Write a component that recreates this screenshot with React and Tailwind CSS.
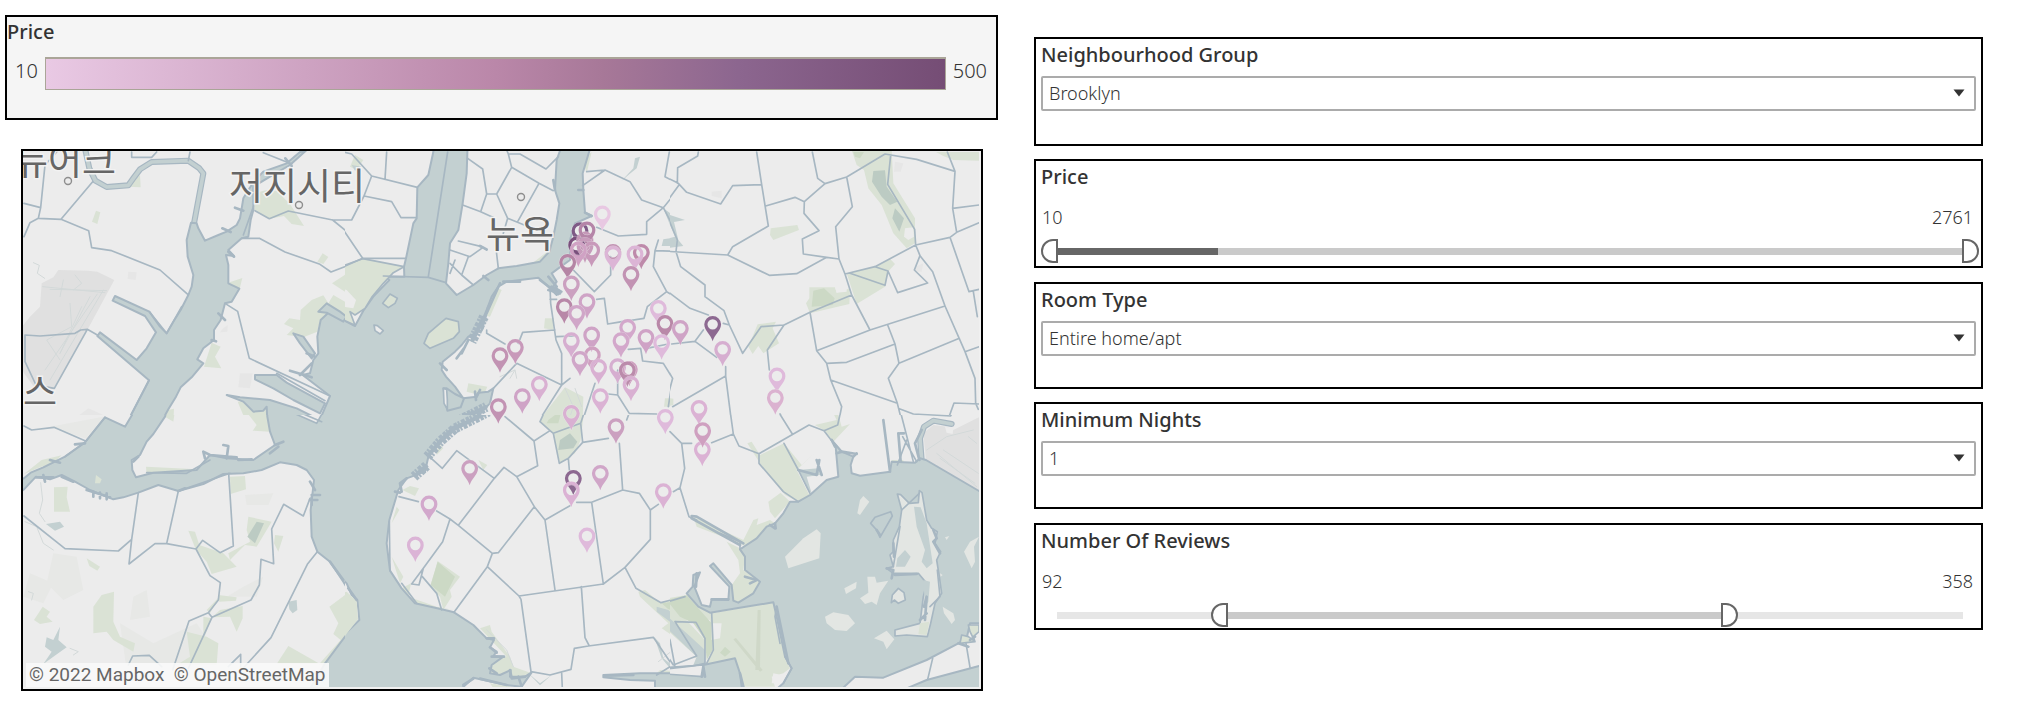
import React, { useState } from 'react';

const LAND = '#ececec';
const WATER = '#c3d0d1';
const EDGE = '#a7b7c2';
const PARK = '#dae2d5';
const GROVE = '#ccd9c5';
const POND = '#bccbc3';
const APRON = '#e0e0e0';
const MARSH = '#e3e6e3';

/* The base map is cut into six sheets, drawn at three units to the pixel. */
const SHEETS = [
  {
    at: [10, 140],
    clip: [0, 0, 1005, 825],
    under: [
      [APRON, 'M30,568L60,530L90,500L95,430L130,412L145,390L235,392L262,395L313,420L232,570L130,748L75,745L42,700L30,665Z'],
      ['#e6e6e6', 'M355,395L380,397L377,420L353,417Z M690,700L728,700L720,745L685,742Z M205,828L235,805L280,825L280,850L200,850Z M640,565L653,555L652,575L630,577Z'],
      [PARK, 'M258,212L271,217L262,252L246,245Z M733,160L770,150L800,153L840,192L882,258L845,252L822,228L778,236L733,210Z M938,340L955,351L940,372L922,365Z M966,430L1030,388L1030,470L1000,452Z M822,552L838,535L870,540L872,510L905,480L940,466L955,490L970,465L1030,500L1030,530L960,515L930,540L922,575L880,592L830,585L850,565Z M605,608L632,620L615,650L634,685L582,680Z M683,785L715,782L735,800L770,795L768,850L710,850Z M475,810L492,806L490,850L450,850Z M355,140L390,105L392,142Z M650,430L697,414L688,450Z'],
    ],
    rivers: [
      'M226,30L238,85L256,122L290,141L355,136L372,112L390,88L425,66L535,62L568,85L580,100L552,250',
    ],
    water: [
      'M543,248L530,300L533,350L550,405L545,440L535,465L512,510L490,545L470,580L450,560L418,515L315,468L308,482L405,528L438,577L410,625L380,660L270,577L262,588L417,721L340,870L440,870L460,835L475,808L498,770L512,742L545,712L580,670L562,658L580,625L612,600L612,570L632,540L645,490L665,485L688,446L655,430L655,375L648,345L672,348L655,330L695,295L715,290L722,240L730,210L730,140L780,110L840,75L890,30L870,36L830,70L760,95L735,120L715,150L700,175L690,235L680,255L650,275L625,285L585,302L565,265L560,250Z',
      'M1050,560L955,518L932,540L922,590L925,640L910,660L900,700L878,705L960,768L925,850L1050,870Z',
      'M735,705L800,705L830,728L945,790L930,820L850,780L790,745L735,718Z',
      'M650,765L690,772L780,780L860,805L930,840L900,900L775,900L770,800L760,812L730,815L700,785Z',
      'M850,580L880,590L915,640L905,655L870,610Z M925,515L950,490L990,515L1010,530L1000,545L950,518Z',
    ],
    lines:
      'M42,190L92,203L105,75L140,36M92,203L85,235L60,248L42,290M85,235L153,238L248,125M153,238L236,272L245,323L305,332L450,390L535,465M365,36V52H425L440,36M540,36L535,62M735,212L778,236L835,213L968,240H1030M968,240L1005,270L1030,310M695,295H748L825,336L930,373L963,396L1030,370M645,490L683,514L718,655L960,768M800,700L945,782M760,38L845,72M45,585L90,588L195,580L212,570L232,568L262,585M45,585V665L78,735L133,745L232,568M700,285L730,200M418,515L470,580L515,500M355,840L417,721',
    ticks: 'M675,203L700,212M637,265L662,276M625,520L645,540M605,600L618,604M840,692L905,712M905,670L870,705M890,640L915,650M1012,512L1020,525M280,835L320,850M655,335L672,350M826,55L845,78',
    faint: 'M98,440L285,458M120,448L290,452M160,420L150,470M195,405L215,430L190,450M280,450L120,720M262,462L105,690M240,470L150,640M180,490L185,560L110,600L150,660M70,368L88,376L82,400L104,415M215,500L150,640',
  },
  {
    at: [340, 140],
    clip: [15, 0, 975, 825],
    under: [
      [PARK, 'M45,45L70,60L50,90L30,80Z M615,535H642L640,570L612,565Z M385,730L442,740L430,768L380,755Z M600,352L640,320L620,370L570,375Z M728,60L755,36L740,100Z M675,742L730,770L728,850L590,850Z M975,775L1000,775L1000,800L972,800Z M450,470L475,445L485,450L450,530L440,528Z'],
      [WATER, 'M838,130L880,85L885,55L900,50L890,85L865,105L842,125Z M35,75L65,80L45,92Z M970,205L1020,240L1010,250L1025,318H965L970,298L1005,292Z'],
    ],
    rivers: [],
    water: [
      'M285,10L278,45L265,105L232,142L230,235L220,250L198,355L192,380L193,410H135L148,420L100,470L70,512L45,558L10,540L-30,515V900H360L430,810L450,790L460,745L445,755L415,758L410,770L370,775L345,740L318,710L305,690L308,665L345,635L365,615L385,590L405,580L425,545L440,510L455,470L475,440L500,425L595,413L620,435L650,465L665,455L640,440L650,425L635,400L655,385L690,360L690,300L705,250L755,228L735,218L730,150L728,100L740,60L755,10H668L650,60L645,150L658,190L650,240L640,290L628,335L600,365L530,378L475,385L440,405L400,435L350,465L318,430L325,370L330,310L355,270L368,190L380,100L383,10Z',
      'M310,745L320,745L345,762L372,775L362,802L322,812Z',
    ],
    islands: [
      [PARK, 'M318,535L355,545L358,575L340,595L270,625L252,610L265,580L300,550Z'],
      [PARK, 'M128,490L150,462L172,475L165,490L145,503Z'],
      [LAND, 'M102,555L112,557L130,572L120,582L105,572Z'],
      [LAND, 'M310,745L320,748L322,780L322,808L312,790Z'],
      [PARK, 'M-20,388L68,356L192,380L160,398L130,430L95,472L75,505L45,525L30,515L45,556L-20,525Z'],
    ],
    over: [[LAND, 'M-10,440L20,450L48,480L40,505L10,500L-10,485Z']],
    lines:
      'M323,36L265,410M130,408L265,412L318,428M0,385L68,355H198M140,36L135,118M10,36L35,42L95,108L232,142M95,108L72,168L155,185L183,233H228M72,168L35,240H-5M0,255L68,355M383,55L428,87L440,162H470L515,82L505,42H540L618,87L655,50M505,42L500,30M515,82L597,130L640,152M597,130L533,245M470,162L503,235L560,258M503,235L490,280M440,162L422,215L368,195M422,215L465,235M355,303L425,320L440,330M425,325L390,350L330,330M468,325L475,385M385,350L365,405L400,435M330,370L365,405M345,360L330,400M728,137L795,90L870,125L905,180L970,203L1030,130M740,95L795,90M988,36L975,110L1030,140M1015,80V130M970,203L920,245V283L835,288L770,262M970,203L1005,270L1012,310M945,332L1030,335M955,300L945,332L940,380L980,455L1030,485M980,455L922,500L912,535L803,552L793,475L770,478M700,390L763,455L812,405V350M630,478H650M630,440L632,490L648,600L665,640V735L595,845M650,590L700,588M440,570V580L495,612M548,577L645,570M548,577L535,610M530,670L665,735M530,670L460,745M803,552L870,540M865,628L902,625L908,663L970,670L998,715L985,800M920,625L985,612M833,690V765L868,820M833,765L805,762M868,820L950,822M765,730L725,850M690,715L665,735',
    ticks:
      'M480,430L440,520M445,500L425,570M430,540L400,600M350,655L372,625M365,640L385,600M375,830L440,800M350,835L400,815M405,755L408,780M420,750L410,770M600,420L655,462M625,410L650,440M635,440L660,455M420,318L440,328M640,120L645,150M430,408L445,420M735,218L755,228M715,150L730,150M490,425L540,425M300,670L320,690M625,450L660,460',
    piers: 'M432,530L395,605M350,845L440,800',
    faint: 'M675,745L700,800L690,830M705,745L725,800M480,710L525,690L510,715M525,690L530,715',
  },
  {
    at: [660, 140],
    clip: [30, 0, 990, 825],
    under: [
      [PARK, 'M575,30H695L700,130L765,235V310L740,325L700,280L665,195L625,145L612,90L590,75Z M828,36H957V62L880,60L850,48Z M332,265L412,255L417,270L340,300L330,285Z M448,442H525L530,458L570,445L568,492L450,520L438,490L448,475Z M560,400L650,378L690,356L705,372L684,395L675,440L590,492Z M293,553L348,545L338,565L357,610L310,640L295,618L278,642L265,620Z M14,772L40,776L40,795L18,800Z M515,828L540,826L530,850L518,850Z'],
      [GROVE, 'M580,36H612L600,55L585,50Z M460,452L492,445L524,475L518,495L455,500Z'],
      [POND, 'M640,93L675,91L680,140L712,185L690,195L665,170L636,125Z M705,205L732,235L718,275L697,235Z'],
      [LAND, 'M735,265L760,262L762,290L745,300L732,290Z M525,442H560V455L530,458Z'],
      [WATER, 'M5,195L30,225L75,240L42,246L55,300L70,318L5,326V300L45,290L20,230Z'],
      ['#e6e6e6', 'M705,65L730,70L722,95L702,95Z M765,380L790,370L785,395L765,395Z M155,155L185,152V175L155,168Z'],
    ],
    rivers: [],
    water: [],
    lines:
      'M28,36L15,110L55,130L80,157L182,192L218,137L305,134M115,36L113,48L53,83L52,130M290,36L305,134L325,258L218,320L203,345L-10,332M317,198L405,172L433,185L495,131L560,111L675,42L770,58L885,94L862,36M457,36L473,115L495,131M433,185L432,220L477,272L427,297L430,342L500,352L537,357L527,260L577,200L560,111M203,345L328,406L410,401L500,352M57,135L10,200L52,300L48,335L62,380L135,435V470L192,512L208,555L248,640L303,560L372,555L450,517L575,465L555,402L537,357M555,402L645,380L767,315L870,292L890,277L957,248M645,380L684,393L675,436L570,400M684,393L713,458L803,429L763,390L780,347L767,315L764,268L683,133L692,45M885,94L878,205L957,195M878,205L890,277M870,292L927,455L957,448M940,455L952,530M780,347L818,395L855,498L915,635L945,715L947,790L955,808M915,635L957,620M575,465L630,570M470,632L630,570L855,498M450,517L470,632L500,670L560,667L705,612L683,555M705,612L717,670L898,595M717,670L685,715L712,790L727,850M500,670L512,720L712,790M512,720L545,800L535,850M718,806L760,822L868,828L882,789L957,792M372,555L322,630L328,690M190,550L208,555M20,452L90,505L145,525M0,415L20,452L0,468M130,570L105,604L35,612M105,604L170,652M197,680V708L38,800M197,708L215,850M0,670L12,672L38,715L15,800M360,822L385,860',
    ticks: 'M663,838L680,838M810,838L830,840',
    faint: '',
  },
  {
    at: [10, 410],
    clip: [0, 15, 1005, 850],
    under: [
      ['#e7e8e6', 'M130,430L200,440L220,540L160,570L110,520Z M330,640L430,700L560,640L600,700L500,780H350Z M120,50L280,20L240,90Z M700,530L760,500L740,560L650,560Z M60,490L130,520L100,580L40,560Z M705,255L790,250L775,285L710,285Z M370,560L410,540L420,620L360,630Z'],
      [PARK, 'M132,232L173,230L170,262L180,305H132Z M42,192L95,150L155,136L130,160L90,172Z M660,200L705,198L708,238L662,252Z M408,170L560,178L555,188L410,195Z M715,320L785,335L740,410L705,405L660,450L655,430L720,395L710,360Z M795,375L820,378L805,425L792,400Z M535,362L555,365L568,405L640,430L680,470L605,492L590,455L558,420Z M250,590L275,555L312,545L310,635L330,680L375,700L370,725L310,690L290,665L250,670Z M98,590L120,605L110,620L128,635L90,642L72,630Z M625,555L680,562L678,572L628,575Z M630,600L698,588V625L680,665L660,620L606,622Z M530,665L590,680L625,700L620,765H500L540,740Z M580,620L605,625L580,690Z M835,708L930,762H800Z M1015,548L958,590L985,640L970,672L992,690L925,765H948L1040,650V560Z M705,0H775L780,65L728,62L740,45Z M470,0H495L490,35L465,20Z M230,445L270,470L262,482L238,468Z M590,600L628,560L600,610Z'],
      [POND, 'M740,335L762,340L735,400L712,380Z'],
      [WATER, 'M108,342L150,335L162,350L135,362Z M835,575L860,570L862,600L848,610L838,598Z M110,682L130,690L150,650L145,690L170,712L130,740L100,762L125,725L105,710Z'],
    ],
    rivers: [],
    water: [
      'M-20,225L42,205L62,188L100,172L165,140L225,97L285,22L345,50L375,0V-40H480L465,20L430,72L410,95L390,135L365,150L367,180L378,202L430,188L560,180L600,135L650,145L730,150L795,105L780,65L772,20L770,-40H1060V610L1020,550L1000,515L960,455L922,425L905,380L902,300L912,210L890,180L860,165L810,157L755,180L700,190L640,192L580,222L505,243L445,225L385,248L340,262L310,268L240,240L195,215L155,195L120,208L78,200L42,238L-20,280Z',
      'M1060,610L1020,660L945,760L880,870H1060Z',
    ],
    islands: [
      [LAND, 'M820,-30L830,0L920,40L945,-5L960,-30Z'],
      [PARK, 'M258,195L275,208L270,220L255,220Z', 1],
    ],
    lines:
      'M42,48L65,60L132,52L225,92M42,318L165,416L325,423L365,388L385,248M365,388L357,462L435,401H470L505,243M470,401L558,417L578,391L630,428L670,408L656,190M558,417L600,497L631,518L625,570L595,608L606,622L723,570L748,525L753,448L791,461L785,357L821,283L880,318L900,265M595,608L537,633L488,780M606,622L535,775M355,765L368,738L418,736L455,770M655,770L692,733V770M922,425L892,463L783,683L690,785M505,243L660,190M285,22L225,97L165,140M410,188L530,190L600,150M935,35L840,-5',
    ticks:
      'M78,202H130M100,195L105,215M155,200L190,215M230,240L300,262M250,245V260M270,248V265M290,250V268M385,140L370,155M600,135L580,125L585,145M650,145L655,108L640,105M600,135L680,142M685,150L725,148M900,215L915,240M905,255H930M905,262V285M900,270H922M795,105L820,95M780,130L805,110M960,455L1000,510M120,150L150,158M505,243L525,235M195,103L225,100',
    faint: 'M92,218L98,270L88,310L105,335M45,335L80,350L100,400L130,420M55,545L70,550L65,570M180,715L205,725L190,735',
  },
  {
    at: [340, 410],
    clip: [15, 15, 975, 850],
    under: [
      [PARK, 'M625,-20H735L722,90L705,130L660,158L638,70L600,35Z M187,240L210,228L237,235L225,258Z M295,100L310,115L290,135Z M415,150L442,165L430,180Z M170,290L178,300L155,340Z M155,440L190,500L180,520Z M213,520L205,560L290,590L340,600L230,585L185,535Z M293,453L360,500L330,540L335,560L310,600L300,560L270,530Z M420,655L450,645L455,665L510,740L520,770L575,790L515,805L450,790L465,740L500,740Z M895,545L915,540L960,578L1030,560V700L965,655L985,640L900,560Z M945,795H1030V785L960,780Z M450,820L520,830L460,835Z M535,790L560,788L540,810Z'],
      [GROVE, 'M625,30L665,0L655,40L620,40Z M293,455L345,500L315,560L272,525Z M965,580L1030,570V600L985,598Z'],
      [POND, 'M660,90L690,70L712,95L700,115L655,120Z'],
      [WATER, 'M950,590L985,600L1030,640V665L950,605Z M943,682L960,700L970,745L1000,768L990,775L965,745Z M565,790L600,820L635,795L600,826Z'],
    ],
    rivers: [],
    water: [
      'M-30,-40H450L445,10L400,30L340,50L300,90L265,140L255,185L200,205L175,240L148,330L140,400L150,482L185,535L225,580L305,598L342,607L400,645L440,685L462,690L450,712L470,725L460,738L490,740L455,765L450,790L480,795L512,780L510,800L555,800L575,787L545,830L500,825L400,803L360,840L340,900H-30V715L58,630L52,570L35,555L20,520L0,500L-30,470Z',
      'M790,795L900,790L990,790L1030,795V870H945V812L870,810L790,802Z',
    ],
    islands: [
      [PARK, 'M-30,735V560L20,545L36,560L50,572L54,628Z', 1],
    ],
    lines:
      'M268,140L307,175L350,122L463,205L492,172L530,200L583,290L615,330L690,287M530,200L593,167L582,93L495,20M582,93L630,62L640,70L658,160L685,145L728,97L805,85M640,70L722,40M600,35L630,62M600,35L625,-20M685,145L688,180M728,97L722,40L735,0M838,100L848,240L755,277H710M848,240L898,250L931,300V388L855,472L790,522L755,277M790,522L537,558L442,470L342,607M442,470L457,430L475,428L583,290M457,430L355,346L463,205M355,346L330,327L308,395L250,475L215,522L237,525L250,475M247,500L290,550L305,600M177,260L235,275M290,303L330,327M615,330L645,540M537,558L543,568L573,785L630,795L693,778L703,715L745,708L940,682L1000,770L1030,765M724,530L735,683L748,708M665,790L667,835M855,472L888,535L963,578L1030,560M931,300L955,283M1000,240L1030,230M868,8L945,12M868,8L860,30M990,65L1030,110M950,795L990,770M150,482L148,335M185,520L230,580M1030,660L1008,638L1030,630',
    ticks: 'M200,205L180,220L185,245M165,245L180,248M440,685H462M450,712L470,728M455,740H492M448,775L470,790M510,780L515,805L555,800M535,800L545,830M500,825L420,806M795,797L880,795M370,825L400,806M25,535L50,570',
    faint: 'M440,660L500,720L520,770M955,755L1005,715',
    piers: 'M262,140L300,95L345,55L400,28L445,5M222,200L262,165',
  },
  {
    at: [660, 410],
    clip: [30, 15, 990, 850],
    under: [
      [APRON, 'M798,150L790,70L820,45L860,50L880,60L940,30L1020,-10V285L957,243Z'],
      [LAND, 'M855,50L880,55L878,72L860,68Z M818,165L850,185L830,182Z'],
      [PARK, 'M100,320L250,390L280,330L295,325L290,345L330,330L345,340L290,385L255,408L200,385L110,350Z M200,395L240,415L255,440L250,480L300,510L280,550L235,578L215,570V525L240,490L235,450Z M465,45L530,30L520,10L535,15L545,50L570,42L520,95L495,62Z M372,100L425,165L470,123L410,180L448,255L415,275L375,255L300,160L262,100L275,95L300,135Z M325,275L362,248L390,275L345,325L330,305Z M-10,570L80,555L115,590L155,610L340,577L350,620L375,740L390,775L370,790L335,800L345,830H250L240,790L225,745L140,762L160,720L150,630L60,610L135,690V760L100,740L40,765L-10,640Z M695,150H730V162H695Z'],
      [GROVE, 'M20,570L80,556L155,640L158,720L140,750L135,690L100,640L60,620Z M195,710L212,725L195,740L180,728Z'],
      [LAND, 'M155,640L185,640L180,685L155,690Z M340,790L365,795L370,820H335Z M10,650L110,740L40,765L0,720Z'],
      [WATER, 'M415,180L475,175L480,195L440,200L455,250L440,235Z M-10,590L80,670L135,720V765H100L110,740L-10,625Z'],
      ['#cfd8c8', 'M293,600L302,600L300,780L286,780Z M220,688L228,684L308,780L300,785Z'],
    ],
    rivers: ['M875,42L820,32L792,50L780,85L785,150'],
    water: [
      'M1020,285L957,243L798,150L780,145L765,158L695,155L690,185L600,197L575,190L572,165L580,140L545,125L515,90L527,110L535,200L500,210L450,255L415,275L390,275L370,310L345,340L320,350L290,385L255,408L240,418L255,440L255,480L300,515L280,550L235,578L220,572L215,525L160,460L150,468L208,530L205,570L155,568L150,590L125,585L103,530L120,487L100,495L98,530L80,550L115,590L150,608L230,595L340,577L350,620L375,740L395,775L370,820L300,880H500L585,800L670,803L800,750L895,700L920,685L930,640L1020,640Z',
      'M-10,780L30,775L130,765L225,745L240,790L250,870H-10Z',
      'M740,835L800,810L957,768L1020,755V870H740Z',
    ],
    islands: [
      [MARSH, 'M375,440L430,385L470,358L482,370L478,445L385,475Z', 1],
      [MARSH, 'M495,620L520,607L565,615L585,640L560,663L525,660L500,640Z', 1],
      [MARSH, 'M592,310L600,270L610,258L628,275L600,315Z M553,535L590,515L588,535L558,552Z M600,565L625,548L622,500L645,500L650,518L685,512L660,550L650,585L635,575L615,582Z M642,685L680,662L703,688L680,718L670,695Z M848,590L880,610L885,630L875,642L852,610Z M957,380L930,395L912,425L935,475L945,455L942,410Z M840,490L848,495L842,500Z M855,382L868,378L860,390Z', 1],
      [WATER, 'M632,340L645,322L692,305L697,318L660,382L650,360Z'],
      [MARSH, 'M712,252L722,254L748,280L775,278L778,242L786,248L800,330L815,355L832,365L825,400L842,425L830,450L838,500L845,550L825,580L812,640L802,680L740,675L705,678L705,660L780,640L790,560L800,520L775,490H700L680,475L700,470L690,435L700,425V390L718,350L725,300Z'],
      [MARSH, 'M694,578L697,555L715,535L732,548L736,570L715,580L703,570Z'],
      [LAND, 'M130,765L128,800L60,795L-10,790V775Z'],
      [PARK, 'M900,700L905,675L925,680L945,695L930,665L925,645H957V665L940,680L945,695Z'],
    ],
    over: [
      [WATER, 'M762,290L782,292L800,340L818,460L800,475L785,455L795,420L770,350Z M708,470L712,445L735,420L752,440L735,470Z M790,510L810,515L805,575L795,590Z'],
      [PARK, 'M780,640L808,635L800,675L775,672Z'],
    ],
    lines:
      'M210,0L220,72L237,108L297,131L447,45L492,62L533,45L543,0M220,72L155,98M355,5L397,72M30,65L65,100H95M65,100L74,175L60,233L40,245M60,233L87,320L110,330M297,131V160L370,245L415,275M372,100L415,180M492,62L515,92L545,125M720,0L760,155M735,10L872,18L880,0M728,80L770,155M712,165L740,90M818,745L803,808M918,700L930,772M725,300L778,250M720,350L700,470M810,590L840,560L832,480M45,635L108,637L135,685V760M45,635L110,738L40,765L-10,690M-10,605L30,690L45,770M135,760L100,768L-10,780M-10,585L75,560M155,610L160,720L140,760M350,590L345,620L360,700M370,820L395,775L375,740M415,180L450,250M240,418V395L180,370',
    ticks:
      'M95,325L240,405M95,318L110,320L250,400M470,150L485,195M415,180L470,195L478,150M530,130L545,125L590,132M670,30L690,185M715,70L722,155M720,70H732M778,150L765,100L785,60M345,340L347,355M330,345L345,355M255,500L290,510L270,520M515,90L525,110M580,140L590,130M155,568H205M110,490L108,530M820,360L830,385L820,395L840,430M700,400L702,440M792,590L800,560L795,630M780,630L800,610M680,475L700,480L695,505M705,495L770,492M650,360L660,375M895,700L925,710M930,690L945,680M240,790L250,830M125,800L130,770L135,800M350,590L385,760',
    faint: 'M830,130L950,230M840,145L945,220M850,120L955,190M800,120L860,80L940,60M925,80L950,100',
  },
];

const PINS = [
  [1, 787, 222, '#e8c8e2'], [1, 720, 272, '#7e5a86'], [1, 710, 315, '#7a4f7c'], [1, 735, 300, '#c598b8'],
  [1, 741, 270, '#b585a8'], [1, 735, 318, '#c79bbb'], [1, 755, 330, '#c899ba'], [1, 715, 330, '#d0a2c4'],
  [1, 683, 367, '#b585a5'], [1, 819, 337, '#c293b3'], [1, 819, 343, '#dcb5d6'], [1, 904, 337, '#be8aaa'],
  [1, 885, 342, '#dcb5d6'], [1, 873, 403, '#c293b3'], [1, 694, 432, '#cba0c0'], [1, 741, 485, '#cfa3c6'],
  [1, 673, 500, '#b888a8'], [1, 710, 520, '#d0a6c8'], [1, 955, 505, '#dfbadb'], [1, 975, 550, '#b988a8'],
  [1, 863, 562, '#d3a8cb'], [1, 843, 602, '#d3a8cb'], [1, 918, 592, '#cfa3c6'], [1, 965, 608, '#dfbadb'],
  [1, 694, 602, '#d6aed0'], [1, 755, 585, '#cfa3c6'], [1, 757, 645, '#cfa0c0'], [1, 720, 658, '#d0a6c8'],
  [1, 776, 682, '#d9b0d2'], [1, 833, 680, '#d6aed0'], [1, 868, 688, '#cfa0c0'], [1, 862, 690, '#bb8bab'],
  [1, 873, 733, '#d9b0d2'], [1, 526, 622, '#c899ba'], [1, 480, 647, '#c293b3'], [1, 598, 733, '#d9b0d2'],
  [1, 547, 770, '#cfa3c6'], [1, 475, 800, '#c293b3'], [1, 781, 770, '#dbb2d4'], [1, 694, 820, '#d9b0d2'],
  [1, 976, 832, '#dfbadb'], [2, 61, 565, '#cfa3c6'], [2, 158, 553, '#8d6991'], [2, 188, 628, '#d6aed0'],
  [2, 351, 708, '#dfbadb'], [2, 346, 773, '#dbb2d0'], [5, 127, 118, '#dbb2d4'], [2, 117, 805, '#dbb2d4'],
  [5, 128, 62, '#cfa0c0'], [4, 828, 50, '#cba0c0'], [4, 389, 175, '#cba0c0'], [4, 267, 282, '#d2a8cc'],
  [4, 226, 405, '#dbb4d6'], [4, 700, 205, '#8d6991'], [4, 694, 240, '#dbb2d4'], [4, 781, 190, '#d0a6c8'],
  [4, 741, 378, '#dfbadb'], [4, 970, 245, '#dbb2d4'],
];

const PLACES = [
  ['뉴어크', 65, 175],
  ['저지시티', 297, 200],
  ['뉴욕', 520, 248],
  ['스', 40, 406],
];

const TOWNS = [[68, 181], [299, 205], [521, 197]];

function Sheet({ sheet, index }) {
  const [x, y, w, h] = sheet.clip;
  return (
    <g transform={`translate(${sheet.at[0]} ${sheet.at[1]}) scale(0.333333)`}>
      <clipPath id={`sheet-${index}`}>
        <rect x={x} y={y} width={w} height={h} />
      </clipPath>
      <g clipPath={`url(#sheet-${index})`} strokeLinejoin="round" strokeLinecap="round" fill="none">
        {sheet.under.map(([fill, d], i) => <path key={i} d={d} fill={fill} />)}
        {sheet.faint && <path d={sheet.faint} stroke="#d3d9d9" strokeWidth="3" />}
        {sheet.rivers.map((d) => <path key={d} d={d} stroke={EDGE} strokeWidth="18" />)}
        {sheet.rivers.map((d) => <path key={d} d={d} stroke={WATER} strokeWidth="11" />)}
        {sheet.water.map((d) => <path key={d} d={d} fill={WATER} stroke={EDGE} strokeWidth="6" />)}
        {(sheet.islands || []).map(([fill, d, bare]) => (
          <path key={d} d={d} fill={fill} stroke={bare ? 'none' : EDGE} strokeWidth="5" />
        ))}
        {(sheet.over || []).map(([fill, d]) => <path key={d} d={d} fill={fill} />)}
        {sheet.piers && (
          <>
            <path d={sheet.piers} stroke={EDGE} strokeWidth="12" strokeLinecap="butt" />
            <path d={sheet.piers} stroke={EDGE} strokeWidth="30" strokeDasharray="10 3 6 5 12 4" strokeLinecap="butt" />
          </>
        )}
        <path d={sheet.lines} stroke={EDGE} strokeWidth="5" />
        <path d={sheet.ticks} stroke={EDGE} strokeWidth="8" />
      </g>
    </g>
  );
}

function Pin({ x, y, color }) {
  return (
    <path
      transform={`translate(${x} ${y})`}
      d="M0 17C-1.6 10.5 -8.4 6.5 -8.4 0A8.4 8.4 0 1 1 8.4 0C8.4 6.5 1.6 10.5 0 17ZM0 -5.2A5.2 5.2 0 1 0 0 5.2A5.2 5.2 0 1 0 0 -5.2Z"
      fill={color}
      fillRule="evenodd"
      stroke="#ececec"
      strokeOpacity="0.55"
      strokeWidth="1"
      paintOrder="stroke"
    />
  );
}

function ListingMap() {
  return (
    <section aria-label="Listing map" className="relative ml-4 mr-[15px] mt-[29px] border-2 border-black">
      <svg viewBox="23 151 958 538" className="block h-auto w-full">
        <rect x="23" y="151" width="958" height="538" fill={LAND} />
        {SHEETS.map((sheet, i) => <Sheet key={i} sheet={sheet} index={i} />)}
        <path d="M980 151V688H23" fill="none" stroke="#f0f0f0" strokeWidth="2" />
        {TOWNS.map(([x, y]) => (
          <circle key={x} cx={x} cy={y} r="3.5" fill="#ececec" stroke="#8e8e8e" strokeWidth="1.4" />
        ))}
        <g
          fontFamily="'Noto Sans CJK KR', sans-serif"
          fontSize="37"
          textAnchor="middle"
          fill="#666666"
          stroke="#f2f2f2"
          strokeWidth="3"
          paintOrder="stroke"
        >
          {PLACES.map(([name, x, y]) => <text key={name} x={x} y={y}>{name}</text>)}
        </g>
        {PINS.map(([s, x, y, color], i) => (
          <Pin key={i} x={SHEETS[s].at[0] + x / 3} y={SHEETS[s].at[1] + y / 3} color={color} />
        ))}
      </svg>
      <p className="absolute bottom-0.5 left-[3px] whitespace-pre bg-[#fafafa]/90 px-[3px] font-['Roboto',sans-serif] text-[19px] leading-6 text-[#666666]">
        <a href="#mapbox">© 2022 Mapbox</a>{'  '}<a href="#openstreetmap">© OpenStreetMap</a>
      </p>
    </section>
  );
}

function Legend() {
  return (
    <section className="border-2 border-black bg-[#f5f5f5] pb-7 pt-px">
      <h2 className="text-xl font-medium leading-7">Price</h2>
      <div className="mt-[11px] flex items-start gap-[7px] pl-2 pr-[9px] text-xl font-light leading-7">
        <span>10</span>
        <div className="h-[33px] flex-1 border border-t-2 border-[#aaa598] bg-[linear-gradient(90deg,#e9c9e4_0%,#ba87a9_50%,#a77898_62%,#8c668f_77%,#754d75_100%)]" />
        <span>500</span>
      </div>
    </section>
  );
}

function Dropdown({ id, label, options, className }) {
  return (
    <section className={`border-2 border-black pl-[5px] pr-[5px] pt-0.5 ${className}`}>
      <label htmlFor={id} className="block text-xl font-medium leading-7">{label}</label>
      <div className="relative mt-[7px]">
        <select
          id={id}
          className="block h-[35px] w-full appearance-none rounded-[2px] border-2 border-[#ababab] bg-white pb-0.5 pl-[6px] text-lg font-light leading-7 outline-none"
        >
          {options.map((o) => <option key={o}>{o}</option>)}
        </select>
        <svg viewBox="0 0 12 8" className="pointer-events-none absolute right-[11px] top-[13px] h-2 w-3">
          <path d="M0.5 0.5H11.5L6 7.5Z" fill="#333333" />
        </svg>
      </div>
    </section>
  );
}

const HANDLE =
  'pointer-events-none absolute inset-0 m-0 h-6 w-full appearance-none bg-transparent outline-none [&::-webkit-slider-thumb]:pointer-events-auto [&::-webkit-slider-thumb]:h-6 [&::-webkit-slider-thumb]:w-[17px] [&::-webkit-slider-thumb]:appearance-none [&::-webkit-slider-thumb]:border-2 [&::-webkit-slider-thumb]:border-[#666666] [&::-webkit-slider-thumb]:bg-white';

function RangeFilter({ id, label, min, max, from, to, marked, className }) {
  const [low, setLow] = useState(from);
  const [high, setHigh] = useState(to);
  const share = (v) => ((v - min) / (max - min)) * 100;
  return (
    <section className={`border-2 border-black pl-[5px] pr-[2px] pt-0.5 ${className}`}>
      <h2 id={`${id}-title`} className="text-xl font-medium leading-7">{label}</h2>
      <div className="mt-3 flex justify-between pl-px pr-[6px] text-lg font-light leading-7">
        <output htmlFor={`${id}-low`}>{low}</output>
        <output htmlFor={`${id}-high`}>{high}</output>
      </div>
      <div role="group" aria-labelledby={`${id}-title`} className="relative mt-2 flex h-6 items-center px-4">
        <div className="relative h-[7px] flex-1 bg-[#e6e6e6]">
          <div
            className="absolute inset-y-0 bg-[#cacaca]"
            style={{ left: `${share(low)}%`, right: `${100 - share(high)}%` }}
          />
          {marked && <div className="absolute inset-y-0 left-0 bg-[#666666]" style={{ width: `${share(marked)}%` }} />}
        </div>
        <input
          id={`${id}-low`}
          type="range"
          aria-label={`${label} minimum`}
          min={min}
          max={max}
          value={low}
          onChange={(e) => setLow(Math.min(+e.target.value, high))}
          className={`${HANDLE} [&::-webkit-slider-thumb]:rounded-l-[12px]`}
        />
        <input
          id={`${id}-high`}
          type="range"
          aria-label={`${label} maximum`}
          min={min}
          max={max}
          value={high}
          onChange={(e) => setHigh(Math.max(+e.target.value, low))}
          className={`${HANDLE} [&::-webkit-slider-thumb]:rounded-r-[12px]`}
        />
      </div>
    </section>
  );
}

export default function App() {
  return (
    <main className="flex items-start gap-9 bg-white pl-[5px] pr-[41px] font-['Noto_Sans',sans-serif] text-[#333333]">
      <div className="min-w-0 flex-[993] pt-[15px]">
        <Legend />
        <ListingMap />
      </div>
      <div className="min-w-0 flex-[949] pt-[37px]">
        <Dropdown id="group" label="Neighbourhood Group" options={['Brooklyn', 'Bronx', 'Manhattan', 'Queens', 'Staten Island']} className="pb-[33px]" />
        <RangeFilter id="price" label="Price" min={10} max={2761} from={10} to={2761} marked={500} className="mt-[13px] pb-[3px]" />
        <Dropdown id="room" label="Room Type" options={['Entire home/apt', 'Private room', 'Shared room']} className="mt-[14px] pb-[31px]" />
        <Dropdown id="nights" label="Minimum Nights" options={['1', '2', '3', '4', '5']} className="mt-[13px] pb-[31px]" />
        <RangeFilter id="reviews" label="Number Of Reviews" min={3} max={484} from={92} to={358} className="mt-[14px] pb-px" />
      </div>
    </main>
  );
}
